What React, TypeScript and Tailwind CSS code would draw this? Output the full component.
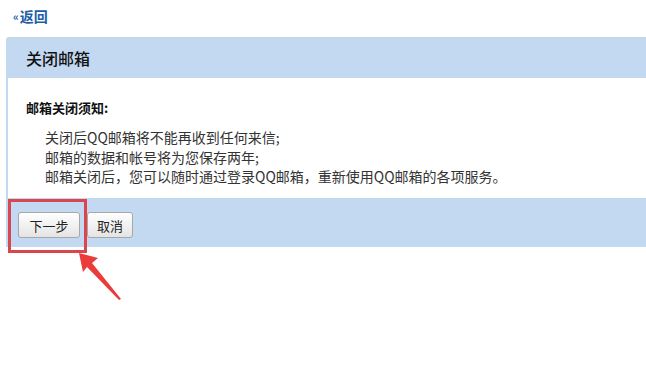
import React from 'react';

const font = { fontFamily: '"Noto Sans CJK SC", "Noto Sans", sans-serif' };

function Btn({ label, w }: { label: string; w: string }) {
  return (
    <button
      className={`${w} h-[26px] rounded-[3px] border border-[#a7a7a7] bg-gradient-to-b from-white to-[#e4e4e4] text-[13px] text-[#222] leading-none`}
    >
      {label}
    </button>
  );
}

export default function App() {
  return (
    <div className="relative w-[646px] h-[368px] bg-white overflow-hidden text-[#222]" style={font}>
      {/* back link */}
      <div className="h-[37px] pl-[13px] pt-[6px] flex items-start">
        <a className="text-[#1d5fa5] text-[14px] leading-[20px] font-bold flex items-center">
          <span className="text-[11px] mr-[1px]">«</span>返回
        </a>
      </div>

      {/* panel */}
      <div className="ml-[6px]">
        <div className="h-[41px] bg-[#c3d9f1] rounded-tl-[3px] border-t border-[#c8d4e0] pl-[20px] flex items-center text-[16px] font-medium text-[#111]">
          关闭邮箱
        </div>
        <div className="h-[120px] border-l-2 border-[#c3d9f1] pl-[18px] pt-[20px]">
          <div className="text-[13px] font-bold leading-[20px] text-[#111]">邮箱关闭须知:</div>
          <div className="pl-[19px] pt-[10px] text-[14px] leading-[19.5px] text-[#333]">
            <div>关闭后QQ邮箱将不能再收到任何来信;</div>
            <div>邮箱的数据和帐号将为您保存两年;</div>
            <div>邮箱关闭后，您可以随时通过登录QQ邮箱，重新使用QQ邮箱的各项服务。</div>
          </div>
        </div>
        <div className="h-[49px] bg-[#c3d9f1] pl-[12px] pt-[14px] flex items-start gap-[7px]">
          <Btn label="下一步" w="w-[62px]" />
          <Btn label="取消" w="w-[46px]" />
        </div>
      </div>

      {/* red highlight box */}
      <div className="absolute left-[8px] top-[199px] w-[79px] h-[54px] border-[3px] border-[#d8464e]" />

      {/* arrow */}
      <svg className="absolute left-[70px] top-[245px]" width="60" height="60" viewBox="0 0 60 60">
        <path d="M9 8 L28 13 L22 18 L51 54 L49 55 L17 22 L13 27 Z" fill="#ec3b3b" />
      </svg>
    </div>
  );
}
